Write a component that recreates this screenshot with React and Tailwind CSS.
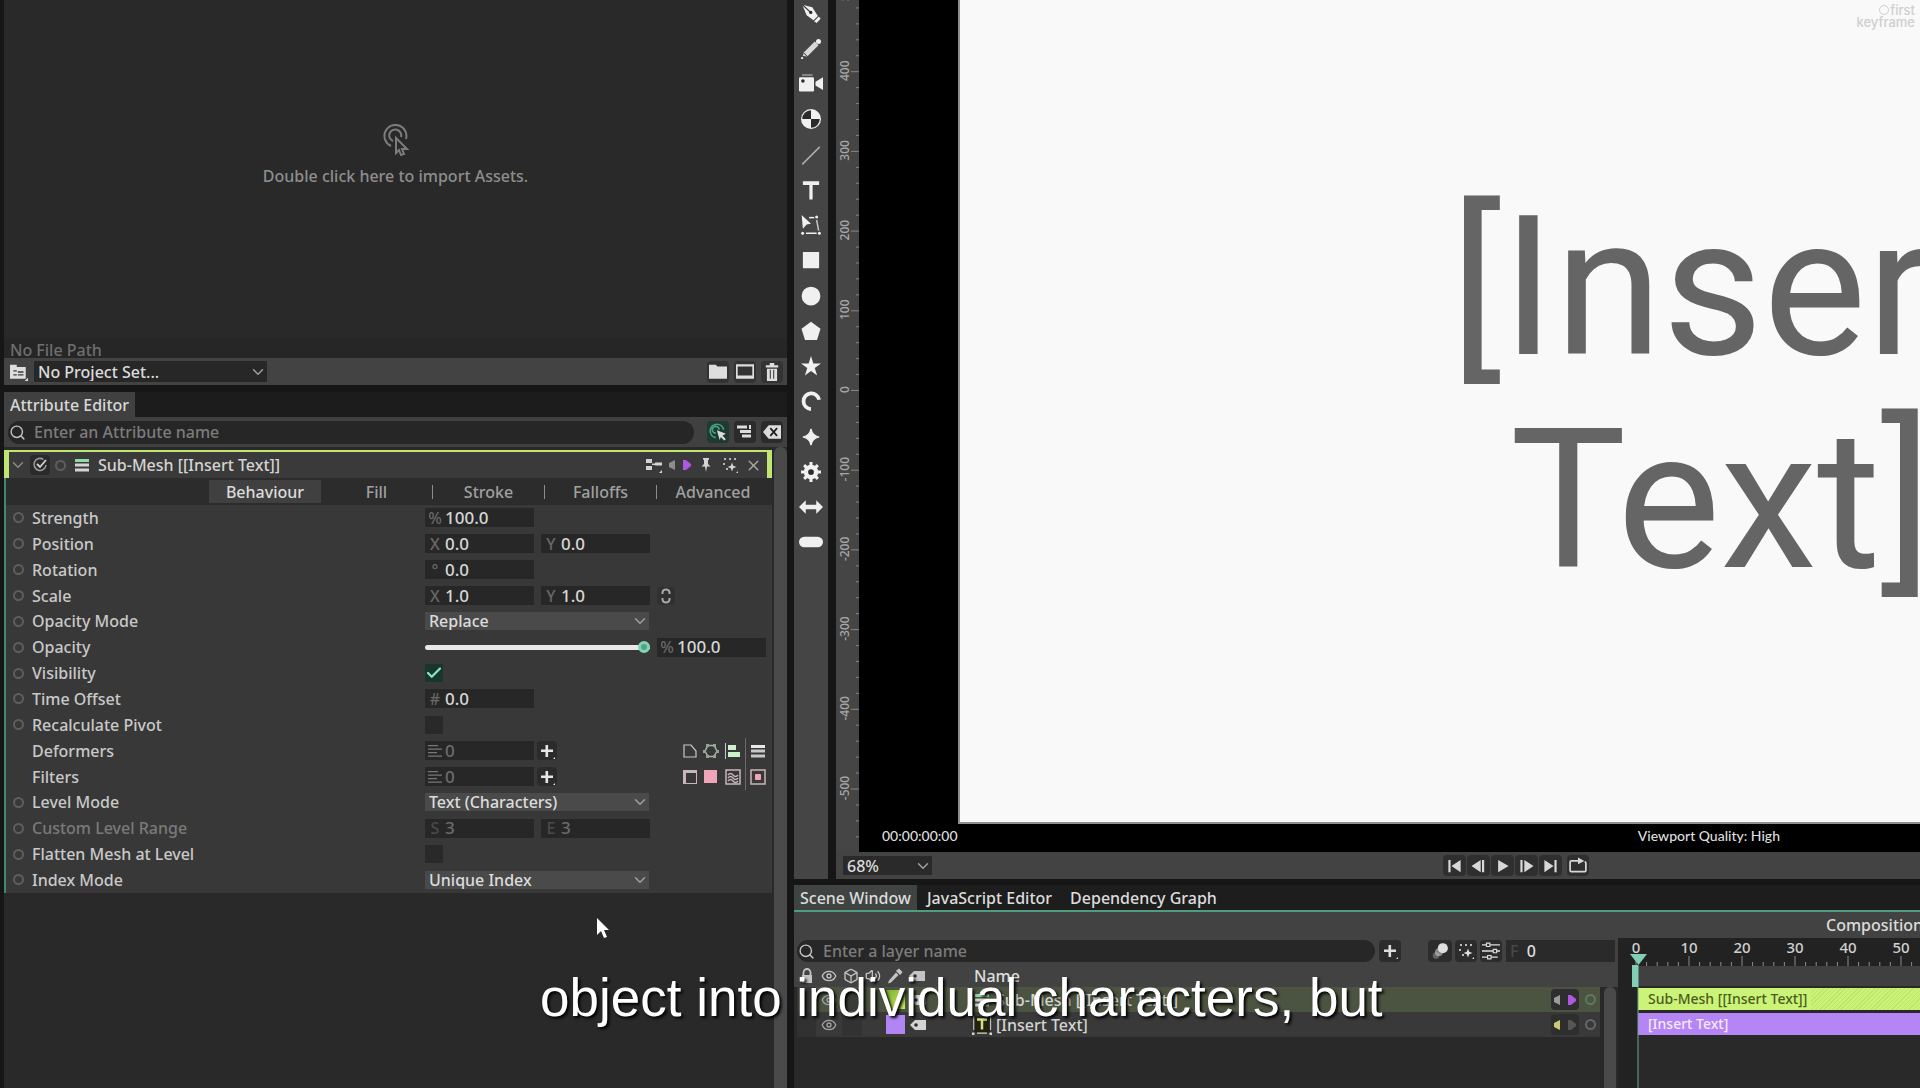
import { useState } from "react";
import { Box, Check, ChevronDown, Eye, Search, Volume2, X } from "lucide-react";

const ATTR_TABS = ["Behaviour", "Fill", "Stroke", "Falloffs", "Advanced"];

const LAYERS = [
  { name: "Sub-Mesh [[Insert Text]]", type: "mesh", selected: true },
  { name: "[Insert Text]", type: "text", selected: false },
];

/* ---------- icons ---------- */

function Glyph({ className = "h-4 w-4", children }) {
  return (
    <svg viewBox="0 0 16 16" fill="currentColor" className={`${className} shrink-0`} aria-hidden="true">
      {children}
    </svg>
  );
}

function Corner() {
  return <path d="M16 13v3h-3z" />;
}

const TOOLS = [
  {
    name: "Pen",
    icon: (
      <>
        <path d="M1 0.500 L9 2.500 L13.500 9.500 L10 13 L4.500 9 Z" />
        <path d="M10.500 13.700 L14.300 10 L15.700 11.800 L12.500 15.200 Z" />
        <path d="M1 0.500 L7.500 6.500" stroke="#2b2b2b" strokeWidth="1" />
        <circle cx="7.800" cy="6.700" r="1.300" fill="#2b2b2b" />
      </>
    ),
  },
  {
    name: "Pencil",
    icon: (
      <>
        <path d="M2 11 L11 2 L14 5 L5 14 L1.500 13.500 Z" fill="#d8d8d8" />
        <circle cx="14" cy="2" r="2" />
        <circle cx="0.900" cy="15.200" r="0.900" />
        <path d="M2 11l3 3" stroke="#2b2b2b" strokeWidth="0.800" />
      </>
    ),
  },
  {
    name: "Camera",
    icon: (
      <>
        <rect x="2" y="1.500" width="7" height="1" fill="#9a9a9a" />
        <rect x="0" y="3.500" width="10" height="9.500" rx="0.800" />
        <circle cx="2.600" cy="6" r="1.200" fill="#2b2b2b" />
        <path d="M16 3.500v8.500l-5-3v-2.500z" />
      </>
    ),
  },
  {
    name: "Checker",
    icon: (
      <>
        <circle cx="8" cy="8" r="8" />
        <path d="M8 1V8H1A7 7 0 0 1 8 1zM8 15V8h7A7 7 0 0 1 8 15z" fill="#2b2b2b" />
      </>
    ),
  },
  { name: "Line", icon: <path d="M1 15.500 L15 1.500" stroke="#b0b0b0" strokeWidth="1.200" /> },
  { name: "Text", icon: <path d="M1.500 1h13v3H9.300V15.500H6.700V4H1.500z" /> },
  {
    name: "Transform",
    icon: (
      <>
        <path d="M0.500 0 L8 7 L4.500 7.500 L1.500 11 Z" />
        <rect x="6.500" y="1.500" width="4" height="1.200" />
        <circle cx="12.500" cy="1.500" r="1.200" />
        <path d="M12.500 4l1.600 8.500" stroke="#c8c8c8" strokeWidth="1.200" />
        <rect x="4" y="14" width="8.500" height="1.200" />
        <circle cx="1.300" cy="14.600" r="1.200" />
        <circle cx="14.700" cy="14.600" r="1.200" />
      </>
    ),
  },
  { name: "Rectangle", icon: <rect x="1.500" y="1.500" width="13" height="13" rx="0.500" /> },
  { name: "Ellipse", icon: <circle cx="8" cy="8" r="7.500" /> },
  { name: "Polygon", icon: <path d="M8 0.500l7.600 5.700-2.800 9H3.200L0.400 6.200z" /> },
  { name: "Star", icon: <path d="M8 0l1.900 6h6.100l-5 3.500 1.900 6L8 12 3.100 15.500l1.900-6L0 6h6.100z" /> },
  { name: "Arc", icon: <path d="M14.500 7A6.300 6.300 0 1 0 8 14.500" fill="none" stroke="currentColor" strokeWidth="3" /> },
  { name: "Super ellipse", icon: <path d="M8 1.500Q9 7 14.500 8 9 9 8 14.500 7 9 1.500 8 7 7 8 1.500z" stroke="currentColor" /> },
  {
    name: "Gear",
    icon: (
      <>
        <circle cx="8" cy="8" r="5.800" />
        <path
          d="M8 0v16M0 8h16M2.500 2.500l11 11M13.500 2.500l-11 11"
          stroke="currentColor"
          strokeWidth="2.400"
        />
        <circle cx="8" cy="8" r="2.300" fill="#2b2b2b" />
      </>
    ),
  },
  { name: "Arrow", icon: <path d="M0 8l4.500-4.500v3h7v-3L16 8l-4.500 4.500v-3h-7v3z" /> },
  { name: "Capsule", icon: <rect x="0" y="4.500" width="16" height="7" rx="3.500" /> },
];

function FolderIcon() {
  return (
    <Glyph className="h-[18px] w-[18px]">
      <path d="M0 1.500h6l1.500 1.500H16V14H0z" />
    </Glyph>
  );
}

function ProjectIcon() {
  return (
    <Glyph className="h-[18px] w-[18px]">
      <path d="M0 1.500h6v2h8V14H0z" />
      <path d="M3 7h3m1 1h5M3 10.500h3m1 0h5" stroke="#3a3a3a" strokeWidth="1.200" />
      <Corner />
    </Glyph>
  );
}

function PlusIcon() {
  return (
    <Glyph>
      <path d="M6.500 2h2.600v4.500H14v2.600H9.100V14H6.500V9.100H2V6.500h4.500z" />
      <path d="M16 14v2h-2z" />
    </Glyph>
  );
}

function MenuBars({ tint }) {
  return (
    <Glyph>
      <path d="M1 2h14v3H1z" fill={tint} />
      <path d="M1 6.500h14v3H1zM1 11.500h14v3H1z" />
    </Glyph>
  );
}

function SparkIcon() {
  return (
    <Glyph>
      <path d="M2 1h2v2H2zM7 1h2v2H7zM12 1h2v2h-2zM1 6h2v2H1zM4 11h2v2H4z" opacity="0.8" />
      <path d="M10 5.500l1.200 3.300 3.300 1.200-3.300 1.200L10 14.500l-1.200-3.300L5.500 10l3.300-1.200z" />
      <path d="M16 14v2h-2z" />
    </Glyph>
  );
}

function TagIcon() {
  return (
    <Glyph className="h-4 w-[18px]">
      <path d="M5 3h11v10H5L0 8z" />
      <circle cx="6" cy="8" r="1.800" fill="#2b2b2b" />
    </Glyph>
  );
}

function KeyArrows({ left, right }) {
  return (
    <svg viewBox="0 0 28 16" className="h-4 w-7 shrink-0" aria-hidden="true">
      <path d="M9 3v10L3 10V6z" fill={left} />
      <path d="M17 3v10h3l5-4V7l-5-4z" fill={right} />
    </svg>
  );
}

function SearchIcon() {
  return (
    <span className="flex w-[26px] shrink-0 pl-px text-[#c4c4c4]">
      <Search className="h-[17px] w-[17px]" strokeWidth={2} />
    </span>
  );
}

function Ring({ className = "border-[#5e5e5e]" }) {
  return <span className={`block h-[11px] w-[11px] shrink-0 rounded-full border-2 ${className}`} />;
}

function IconButton({ label, className = "h-[22px] w-[22px]", children }) {
  return (
    <button type="button" aria-label={label} className={`flex shrink-0 items-center justify-center rounded-sm ${className}`}>
      {children}
    </button>
  );
}

/* ---------- form controls ---------- */

function Field({ id, label, prefix, value, disabled }) {
  return (
    <span className="flex h-[19px] w-[109px] shrink-0 items-center bg-[#272727]">
      <span className={`w-5 shrink-0 text-center ${disabled ? "text-[#4a4a4a]" : "text-[#686868]"}`}>
        {prefix}
      </span>
      <input
        id={id}
        aria-label={label}
        defaultValue={value}
        disabled={disabled}
        className={`w-full min-w-0 bg-transparent text-[17px] leading-5 outline-none ${disabled ? "text-[#6c6c6c]" : "text-[#d6d6d6]"}`}
      />
    </span>
  );
}

function Select({ id, label, options, className = "h-[18px] w-[224px] bg-[#4a4a4a]" }) {
  return (
    <span className={`flex shrink-0 items-center ${className}`}>
      <select
        id={id}
        aria-label={label}
        className="h-full w-full appearance-none bg-transparent pl-1 leading-[18px] text-[#dcdcdc] outline-none"
      >
        {options.map((o) => (
          <option key={o}>{o}</option>
        ))}
      </select>
      <ChevronDown className="pointer-events-none -ml-[18px] h-[18px] w-[18px] shrink-0 text-[#a0a0a0]" strokeWidth={2} />
    </span>
  );
}

function Toggle({ id, defaultChecked }) {
  const [on, setOn] = useState(!!defaultChecked);
  return (
    <span className="grid h-[18px] w-[18px] place-items-center">
      <input
        id={id}
        type="checkbox"
        checked={on}
        onChange={() => setOn(!on)}
        className="col-start-1 row-start-1 h-[18px] w-[18px] appearance-none bg-[#292929] checked:bg-[#17372c]"
      />
      {on && (
        <Check className="pointer-events-none col-start-1 row-start-1 h-[18px] w-[18px] text-[#8fe0c0]" strokeWidth={3} />
      )}
    </span>
  );
}

function Row({ id, label, ring = true, dim, children }) {
  return (
    <div className="flex min-h-0 flex-1 items-center">
      <span className="flex w-[26px] shrink-0 items-center pl-[7px]">{ring && <Ring />}</span>
      <label htmlFor={id} className={`w-[393px] shrink-0 ${dim ? "text-[#7a7a7a]" : "text-[#c9c9c9]"}`}>
        {label}
      </label>
      <div className="flex flex-1 items-center gap-[7px]">{children}</div>
    </div>
  );
}

function ListField({ id, label }) {
  return (
    <div className="flex gap-[3px]">
      <Field
        id={id}
        label={label}
        value="0"
        disabled
        prefix={
          <Glyph className="mx-auto h-4 w-4 text-[#777]">
            <path d="M1 2h10v1.200H1zM1 5.500h14v1.200H1zM1 9h9v1.200H1zM1 12.500h14v1.200H1z" />
          </Glyph>
        }
      />
      <IconButton label={`Add to ${label}`} className="h-[19px] w-5 bg-[#2b2b2b] text-[#e6e6e6]">
        <PlusIcon />
      </IconButton>
    </div>
  );
}

/* ---------- left column ---------- */

function AssetsPanel() {
  return (
    <section className="flex h-[385px] flex-col">
      <button
        type="button"
        className="flex flex-1 flex-col items-center bg-[#292929] pt-[124px] text-[#8e8e8e]"
      >
        <svg viewBox="0 0 28 32" className="h-8 w-7" fill="none" stroke="#7c7c7c" strokeWidth="2" aria-hidden="true">
          <path d="M9 22A11 11 0 1 1 24 15" />
          <path d="M11 17a6 6 0 1 1 8-4" />
          <path d="M14 14v15l3-3 2 5 3-1-2-5h5z" />
        </svg>
        <span className="mt-2 leading-6">Double click here to import Assets.</span>
      </button>
      <p className="h-[19px] bg-[#262626] pl-[6px] leading-[22px] text-[#6f6f6f]">No File Path</p>
      <div className="flex h-[27px] items-center bg-[#434343] px-1 text-[#dedede]">
        <IconButton label="Project folder">
          <ProjectIcon />
        </IconButton>
        <Select
          label="Project"
          options={["No Project Set..."]}
          className="ml-1 h-[21px] w-[233px] bg-[#272727]"
        />
        <div className="ml-auto flex gap-[5px]">
          <IconButton label="New folder" className="h-[22px] w-[22px] bg-[#333]">
            <FolderIcon />
          </IconButton>
          <IconButton label="New composition" className="h-[22px] w-[22px] bg-[#333]">
            <Glyph className="h-[18px] w-[18px]">
              <path d="M0 1h16v13H0zM1.500 3v8h13V3z" fillRule="evenodd" />
            </Glyph>
          </IconButton>
          <IconButton label="Delete" className="h-[22px] w-[22px] bg-[#333]">
            <Glyph className="h-[18px] w-[18px]">
              <path d="M2.500 2H6V0h4v2h3.500v2h-11zM3.500 5h9v11h-9z" />
              <path d="M6.500 6v8M9.500 6v8" stroke="#444" />
            </Glyph>
          </IconButton>
        </div>
      </div>
    </section>
  );
}

function EffectIcons() {
  return (
    <div className="ml-auto flex items-center pr-[3px] text-[#c8c8c8]">
      <Glyph className="mr-[5px] h-4 w-4">
        <path d="M2 2h7l5 6v6H2z" fill="none" stroke="currentColor" strokeWidth="1.200" />
      </Glyph>
      <Glyph className="mr-[6px] h-4 w-4">
        <path d="M5 2.500h6L14 8l-3 5.500H5L2 8z" fill="none" stroke="#a8b5a8" strokeWidth="1.500" />
        <path d="M3 1h3v3H3zM10 1h3v3h-3zM0 7h3v3H0zM13 7h3v3h-3zM3 12h3v3H3zM10 12h3v3h-3z" fill="#8fa790" />
      </Glyph>
      <Glyph>
        <path d="M0 0h1v16H0z" />
        <path d="M3 2h8v5H3zM3 9h12v5H3z" fill="#cdf0cf" />
      </Glyph>
      <span className="mx-1 h-[26px] w-px bg-[#6c6c6c]" />
      <MenuBars tint="#e8e8e8" />
    </div>
  );
}

function FilterIcons() {
  return (
    <div className="ml-auto flex items-center pr-[3px] text-[#c9b5bb]">
      <Glyph className="mr-[5px] h-4 w-4">
        <path d="M1 1h14v14H1zM4 4v10h10V4z" fillRule="evenodd" />
      </Glyph>
      <Glyph className="mr-[6px] h-4 w-4">
        <path d="M1 1h13v13H1z" fill="#efa4b8" />
      </Glyph>
      <Glyph>
        <path d="M1 1h14v14H1z" fill="none" stroke="currentColor" strokeWidth="1.500" />
        <path d="M3 6q2.500-3 5 0t5 0M3 9q2.500-3 5 0t5 0M3 12q2.500-3 5 0t5 0" fill="none" stroke="currentColor" strokeWidth="1.500" />
      </Glyph>
      <span className="mx-1 h-[26px] w-px bg-[#6c6c6c]" />
      <Glyph>
        <path d="M1 1h14v14H1z" fill="none" stroke="currentColor" strokeWidth="1.500" />
        <rect x="5" y="5" width="6" height="6" rx="1" fill="#efa4b8" />
      </Glyph>
    </div>
  );
}

function AttributeEditor() {
  const [tab, setTab] = useState("Behaviour");
  const [opacity, setOpacity] = useState(100);

  return (
    <section className="flex min-h-0 flex-1 flex-col pt-[7px]">
      <div className="flex h-[25px] bg-[#1c1c1c]">
        <h2 className="bg-[#404040] px-[6px] leading-[26px] text-[#d8d8d8]">Attribute Editor</h2>
      </div>
      <div className="flex h-[30px] items-center bg-[#404040] px-1">
        <div className="flex h-[23px] flex-1 items-center rounded-full bg-[#262626]">
          <SearchIcon />
          <input
            aria-label="Attribute search"
            placeholder="Enter an Attribute name"
            className="w-full bg-transparent text-[#ccc] outline-none placeholder:text-[#7c7c7c]"
          />
        </div>
        <div className="ml-[13px] flex gap-[5px] text-[#dcdcdc]">
          <IconButton label="Track selection" className="h-[22px] w-[22px] bg-[#1f3a30]">
            <Glyph className="h-[18px] w-[18px]">
              <path d="M6 13A6 6 0 1 1 13 6M6 9a3 3 0 1 1 3-3" fill="none" stroke="#46a27f" strokeWidth="1.500" />
              <path d="M7 6.500l8 3-3 1.500 3 3.500-1.500 1-3-3-1 2.500z" />
            </Glyph>
          </IconButton>
          <IconButton label="Show connections" className="h-[22px] w-[22px] bg-[#2b2b2b]">
            <Glyph>
              <path d="M0 1.500h10v3H0zM3 6h11v3H3zM5 10.500h9v3H5zM12 1h2v4h-2z" />
            </Glyph>
          </IconButton>
          <IconButton label="Clear" className="h-[22px] w-[22px] bg-[#2b2b2b]">
            <Glyph className="h-[18px] w-[18px]">
              <path d="M5 2h11v12H5L0 8z" />
              <path d="M6.500 4.500l6 7M12.500 4.500l-6 7" stroke="#222" strokeWidth="1.600" />
            </Glyph>
          </IconButton>
        </div>
      </div>

      <div className="flex min-h-0 flex-1 bg-[#292929]">
        <div className="flex-1 pt-[3px]">
          <header className="flex h-7 items-center border-x-[5px] border-t-2 border-[#bfe673] bg-[#3a3a3a] text-[#d4d4d4]">
            <ChevronDown className="h-[18px] w-[18px] text-[#8a8a8a]" />
            <IconButton label="Enabled" className="ml-[3px] h-[20px] w-[20px] bg-[#2a2a2a]">
              <Glyph>
                <path d="M11.500 2.500A6 6 0 1 0 14 8" fill="none" stroke="#9a9a9a" strokeWidth="1.500" />
                <path d="M5 7l3 3 6-7" fill="none" stroke="currentColor" strokeWidth="1.800" />
              </Glyph>
            </IconButton>
            <span className="ml-[5px] mr-2">
              <Ring />
            </span>
            <MenuBars tint="#8fdca6" />
            <h3 className="ml-2">Sub-Mesh [[Insert Text]]</h3>
            <div className="ml-auto flex items-center pr-1">
              <IconButton label="Connections" className="h-5 w-5">
                <Glyph>
                  <path d="M0 2h6v4H0zM0 9h6v4H0zM6 6.500h4v1.500H6zM9 5.500h7v3H9z" />
                  <Corner />
                </Glyph>
              </IconButton>
              <IconButton label="Keyframes" className="mx-[2px] h-5 w-7">
                <KeyArrows left="#8d8d8d" right="#b056e0" />
              </IconButton>
              <IconButton label="Pin" className="h-5 w-5">
                <Glyph>
                  <path d="M5 1h6v1.500l-1 .5v4l2.500 2.500H9L8 15l-1-5.500H3.500L6 7V3l-1-.5z" />
                </Glyph>
              </IconButton>
              <IconButton label="Presets" className="ml-1 h-5 w-5">
                <SparkIcon />
              </IconButton>
              <IconButton label="Close" className="ml-[3px] h-5 w-5 text-[#a8a8a8]">
                <X className="h-[17px] w-[17px]" />
              </IconButton>
            </div>
          </header>

          <div className="border-l-2 border-[#3f8a6c]">
            <nav className="flex h-[27px] items-center bg-[#2c2c2c] pl-[203px]" role="tablist">
              {ATTR_TABS.map((name, i) => (
                <button
                  key={name}
                  type="button"
                  role="tab"
                  aria-selected={tab === name}
                  onClick={() => setTab(name)}
                  className={`flex h-[23px] w-28 shrink-0 items-center justify-center ${
                    tab === name ? "bg-[#404040] text-[#dcdcdc]" : "text-[#a0a0a0]"
                  }`}
                >
                  <span className="flex-1">{name}</span>
                  {i > 0 && i < 4 && <span className="h-[14px] w-px bg-[#8a8a8a]" />}
                </button>
              ))}
            </nav>
            <div className="flex h-[388px] flex-col bg-[#383838] pr-[3px]">
              <Row id="strength" label="Strength">
                <Field id="strength" prefix="%" value="100.0" />
              </Row>
              <Row id="pos-x" label="Position">
                <Field id="pos-x" prefix="X" value="0.0" />
                <Field label="Position Y" prefix="Y" value="0.0" />
              </Row>
              <Row id="rotation" label="Rotation">
                <Field id="rotation" prefix="°" value="0.0" />
              </Row>
              <Row id="scale-x" label="Scale">
                <Field id="scale-x" prefix="X" value="1.0" />
                <Field label="Scale Y" prefix="Y" value="1.0" />
                <IconButton label="Link scale" className="h-[18px] w-[18px] bg-[#303030] text-[#a8a8a8]">
                  <Glyph>
                    <path
                      d="M4.500 6V4.500a3.500 3 0 0 1 7 0V6M4.500 10v1.500a3.500 3 0 0 0 7 0V10"
                      fill="none"
                      stroke="currentColor"
                      strokeWidth="2"
                    />
                  </Glyph>
                </IconButton>
              </Row>
              <Row id="opacity-mode" label="Opacity Mode">
                <Select id="opacity-mode" options={["Replace", "Multiply", "Add"]} />
              </Row>
              <Row id="opacity" label="Opacity">
                <input
                  id="opacity"
                  type="range"
                  min="0"
                  max="100"
                  value={opacity}
                  onChange={(e) => setOpacity(Number(e.target.value))}
                  className="h-[5px] w-[225px] shrink-0 appearance-none rounded-full bg-[#e8e8e8] [&::-webkit-slider-thumb]:h-3 [&::-webkit-slider-thumb]:w-3 [&::-webkit-slider-thumb]:appearance-none [&::-webkit-slider-thumb]:rounded-full [&::-webkit-slider-thumb]:border-[3px] [&::-webkit-slider-thumb]:border-[#83d3b5] [&::-webkit-slider-thumb]:bg-[#4fa585]"
                />
                <Field label="Opacity percent" prefix="%" value="100.0" />
              </Row>
              <Row id="visibility" label="Visibility">
                <Toggle id="visibility" defaultChecked />
              </Row>
              <Row id="time-offset" label="Time Offset">
                <Field id="time-offset" prefix="#" value="0.0" />
              </Row>
              <Row id="pivot" label="Recalculate Pivot">
                <Toggle id="pivot" />
              </Row>
              <Row id="deformers" label="Deformers" ring={false}>
                <ListField id="deformers" label="Deformers" />
                <EffectIcons />
              </Row>
              <Row id="filters" label="Filters" ring={false}>
                <ListField id="filters" label="Filters" />
                <FilterIcons />
              </Row>
              <Row id="level-mode" label="Level Mode">
                <Select id="level-mode" options={["Text (Characters)", "Text (Words)", "Text (Lines)"]} />
              </Row>
              <Row id="range-start" label="Custom Level Range" dim>
                <Field id="range-start" prefix="S" value="3" disabled />
                <Field label="Custom Level Range End" prefix="E" value="3" disabled />
              </Row>
              <Row id="flatten" label="Flatten Mesh at Level">
                <Toggle id="flatten" />
              </Row>
              <Row id="index-mode" label="Index Mode">
                <Select id="index-mode" options={["Unique Index", "Shared Index"]} />
              </Row>
            </div>
          </div>
        </div>
        <div className="ml-[2px] w-[13px] rounded-t-md bg-[#4a4a4a]" />
      </div>
    </section>
  );
}

/* ---------- viewport ---------- */

function Toolbox() {
  return (
    <nav className="w-[34px] shrink-0 bg-[#454545] text-[#f0f0f0]" aria-label="Tools">
      <div className="-mt-1 flex flex-col">
        {TOOLS.map((tool, i) => (
          <button
            key={tool.name}
            type="button"
            aria-label={tool.name}
            className={`flex w-full items-center justify-center ${i % 4 === 3 ? "h-[36px]" : "h-[35px]"}`}
          >
            <Glyph className={["Camera", "Arrow", "Capsule"].includes(tool.name) ? "h-6 w-6" : "h-5 w-5"}>
              {tool.icon}
            </Glyph>
          </button>
        ))}
      </div>
    </nav>
  );
}

function VerticalRuler() {
  const marks = [];
  for (let i = 0; i <= 54; i++) {
    const y = -8 + i * 15.94;
    const major = i % 5 === 0;
    marks.push(
      <g key={i}>
        <path d={`M${major ? 15 : 20} ${y}h${major ? 8 : 3}`} stroke="#858585" />
        {major && (
          <text
            textAnchor="middle"
            transform={`translate(13 ${y - 1}) rotate(-90)`}
            fontSize="12"
            fill="#a8a8a8"
          >
            {500 - i * 20}
          </text>
        )}
      </g>
    );
  }
  return (
    <svg className="h-full w-[23px] shrink-0 bg-[#454545]" aria-hidden="true">
      {marks}
    </svg>
  );
}

const PLAYBACK = [
  { label: "First frame", d: "M1 1h2.500v14H1zM15 1v14L4.500 8z" },
  { label: "Previous frame", d: "M12 1h2.500v14H12zM10.500 1v14L0 8z" },
  { label: "Play", d: "M3 1l12 7-12 7z" },
  { label: "Next frame", d: "M1 1h2.500v14H1zM5.500 1v14L16 8z" },
  { label: "Last frame", d: "M12.500 1H15v14h-2.500zM1 1v14l10.500-7z" },
];

function Viewport() {
  return (
    <section className="flex min-w-0 flex-1 flex-col bg-[#434343]">
      <div className="flex min-h-0 flex-1">
        <VerticalRuler />
        <div className="flex min-w-0 flex-1 flex-col bg-black">
          <div className="ml-[99px] min-h-0 flex-1 overflow-hidden border-b-2 border-l-2 border-[#8e8e8e] bg-[#f9f9f9]">
            <div className="relative">
              <p className="absolute right-[5px] top-1 text-right font-[Inter,sans-serif] text-[13px] leading-3 text-[#cfcfcf]">
                <span className="mr-px inline-block h-[10px] w-[10px] rounded-full border border-[#cfcfcf]" />
                first
                <br />
                keyframe
              </p>
              <p className="whitespace-nowrap pl-[490px] pt-[181px] font-[Roboto,sans-serif] text-[195px] font-normal leading-[213px] text-[#656565]">
                <span className="block">[Insert</span>
                <span className="block pl-[60px]">Text]</span>
              </p>
            </div>
          </div>
          <div className="flex h-7 items-center pb-1 font-[Lato,sans-serif] text-sm text-[#dedede]">
            <span className="pl-[23px]">00:00:00:00</span>
            <span className="ml-auto pr-[140px]">Viewport Quality: High</span>
          </div>
        </div>
      </div>
      <div className="flex h-[27px] items-center pl-[7px]">
        <Select label="Zoom" options={["68%", "100%"]} className="h-[19px] w-[89px] bg-[#2a2a2a]" />
        <div className="flex flex-1 items-center justify-center pl-[180px] text-[#d8d8d8]">
          {PLAYBACK.map((b) => (
            <IconButton key={b.label} label={b.label} className="mr-px h-[21px] w-[23px] bg-[#2f2f2f]">
              <Glyph className="h-[14px] w-[15px]">
                <path d={b.d} />
              </Glyph>
            </IconButton>
          ))}
          <IconButton label="Loop" className="ml-1 h-[21px] w-[22px] bg-[#2f2f2f]">
            <Glyph className="h-[18px] w-[18px]">
              <path d="M8 3.500H2a1 1 0 0 0-1 1V12a1 1 0 0 0 1 1h12a1 1 0 0 0 1-1V6a2 2 0 0 0-1-2" fill="none" stroke="currentColor" strokeWidth="1.500" />
              <path d="M8 0.500l5.500 3-5.500 3z" />
            </Glyph>
          </IconButton>
        </div>
      </div>
    </section>
  );
}

/* ---------- scene window ---------- */

function LayerRow({ layer }) {
  const mesh = layer.type === "mesh";
  return (
    <li
      className={`flex h-[25px] items-center text-[#d4d4d4] ${layer.selected ? "bg-[#4b5440]" : "bg-[#393939]"}`}
    >
      <span className="h-full w-[19px] bg-[#2e2e2e]/70" />
      <IconButton label="Toggle visibility" className="h-[22px] w-[26px]">
        <Eye className="h-4 w-4 text-[#a2a2a2]" />
      </IconButton>
      <span className="h-[22px] w-5 bg-[#2e2e2e]/60" />
      <span
        className={`ml-6 h-[19px] w-[19px] ${mesh ? "bg-gradient-to-br from-[#7fae30] to-[#c8f060]" : "bg-[#b285f4]"}`}
      />
      <span className="ml-1">
        <TagIcon />
      </span>
      <span className="ml-[45px] flex w-5 justify-center">
        {mesh ? (
          <MenuBars tint="#8fdca6" />
        ) : (
          <Glyph className="h-5 w-5">
            <path d="M2 1h12v13H2z" fill="#20220f" />
            <path d="M4 2.500h8v2H9v7H7v-7H4z" fill="#d6dc8a" />
            <path d="M0 14h2v2H0zM14 14h2v2h-2zM4 14h8v1H4zM1 1h.800v11H1zM14.500 1h.800v11h-.800z" />
          </Glyph>
        )}
      </span>
      <span className="ml-1">{layer.name}</span>
      <span className="ml-auto flex h-[21px] items-center rounded-sm bg-[#2e2e2e]">
        {mesh ? (
          <KeyArrows left="#9a9a9a" right="#b056e0" />
        ) : (
          <KeyArrows left="#cfc873" right="#555555" />
        )}
      </span>
      <span className="ml-[6px] mr-1">
        <Ring className={mesh ? "border-[#5f7a60]" : "border-[#666]"} />
      </span>
    </li>
  );
}

function LayerList() {
  return (
    <div className="flex w-[824px] shrink-0 flex-col">
      <div className="flex h-[26px] items-center bg-[#424242] pl-[3px] text-[#dedede]">
        <div className="flex h-[22px] w-[578px] items-center rounded-full bg-[#272727]">
          <SearchIcon />
          <input
            aria-label="Layer search"
            placeholder="Enter a layer name"
            className="w-full bg-transparent outline-none placeholder:text-[#7c7c7c]"
          />
        </div>
        <IconButton label="Add layer" className="ml-1 h-[22px] w-[22px] bg-[#2c2c2c]">
          <PlusIcon />
        </IconButton>
        <IconButton label="Motion blur" className="ml-[27px] h-[22px] w-[24px] bg-[#2c2c2c]">
          <Glyph className="h-[18px] w-[18px]">
            <circle cx="4.500" cy="12" r="3" opacity="0.300" />
            <circle cx="7" cy="9" r="3.500" opacity="0.500" />
            <circle cx="10.500" cy="5.500" r="4.500" />
          </Glyph>
        </IconButton>
        <IconButton label="Effects" className="ml-[3px] h-[22px] w-[22px] bg-[#2c2c2c]">
          <SparkIcon />
        </IconButton>
        <IconButton label="Filters" className="ml-[3px] h-[22px] w-[22px] bg-[#2c2c2c]">
          <Glyph className="h-[18px] w-[18px]">
            <path d="M0 2.500h16M0 8h16M0 13.500h14" stroke="currentColor" strokeWidth="1.200" />
            <path d="M4 1h3v3H4zM10 6.500h3v3h-3zM5 12h3v3H5z" fill="#2c2c2c" stroke="currentColor" />
          </Glyph>
        </IconButton>
        <div className="ml-1 flex h-[22px] flex-1 items-center bg-[#2a2a2a] pl-1">
          <label htmlFor="frame" className="w-5 text-[#484848]">
            F
          </label>
          <input id="frame" defaultValue="0" className="w-full bg-transparent outline-none" />
        </div>
        <span className="w-[3px]" />
      </div>
      <div className="flex h-[23px] items-center bg-[#424242] text-[#c4c4c4]">
        <div className="flex items-center gap-1 pl-1">
          <Glyph className="h-4 w-[18px]">
            <path d="M4.500 7V4.500a3.500 3.500 0 0 1 7 0V7" fill="none" stroke="currentColor" strokeWidth="1.800" />
            <path d="M3 7h10v8H3z" />
          </Glyph>
          <Eye className="h-4 w-[18px]" />
          <Box className="h-4 w-[18px]" />
          <Volume2 className="h-4 w-[18px]" />
          <Glyph className="h-4 w-[18px]">
            <path d="M10 2l2-1.500 3.500 3.500L14 6l-1 1-4-4zM9 4.500L11.500 7 4 14.500l-3 1 1-3z" />
          </Glyph>
          <TagIcon />
        </div>
        <span className="ml-12 text-[#dedede]">Name</span>
      </div>
      <div className="flex min-h-0 flex-1 bg-[#292929]">
        <ul className="flex-1 pl-[3px]">
          {LAYERS.map((l) => (
            <LayerRow key={l.name} layer={l} />
          ))}
        </ul>
        <div className="ml-1 mr-[2px] w-3 rounded-t-md bg-[#4a4a4a]" />
      </div>
    </div>
  );
}

function Timeline() {
  const ticks = [];
  for (let i = 0; i <= 27; i++) {
    const x = 18 + i * 10.6;
    const major = i % 5 === 0;
    ticks.push(
      <g key={i}>
        <path d={`M${x} ${major ? 18 : 24}V28`} stroke="#8a8a8a" />
        {major && (
          <text x={x} y="15" textAnchor="middle" fontSize="15" fill="#d0d0d0">
            {i * 2}
          </text>
        )}
      </g>
    );
  }
  return (
    <div className="relative flex min-w-0 flex-1 flex-col overflow-hidden bg-[#292929]">
      <svg className="h-7 w-full shrink-0 bg-[#222]" aria-hidden="true">
        {ticks}
      </svg>
      <div className="h-5 shrink-0 border-l-[20px] border-[#222] bg-[#404040]" />
      <div className="min-h-0 flex-1 border-l-[20px] border-[#222] text-sm">
        <div className="mt-[2px] flex h-[22px] bg-[#cbf377] pl-[10px] leading-[22px] text-[#4a5c20]">
          Sub-Mesh [[Insert Text]]
          <span className="ml-1 flex-1 bg-[repeating-linear-gradient(135deg,#a9cf5866_0px,#a9cf5866_1px,transparent_1px,transparent_3px)]" />
        </div>
        <div className="mt-[3px] h-[22px] bg-[#b585f5] pl-[10px] leading-[22px] text-[#f3eaff]">
          [Insert Text]
        </div>
      </div>
      {/* playhead */}
      <svg viewBox="0 0 18 151" className="absolute left-[12px] top-4 h-[151px] w-[18px]" aria-hidden="true">
        <path d="M0 0h17L8.500 11z" fill="#7fd0b4" />
        <path d="M2 11h6.500v22H2z" fill="#7fd0b4" />
        <path d="M8 33v118" stroke="#6aa890" />
      </svg>
    </div>
  );
}

function SceneWindow() {
  return (
    <section className="mt-[6px] flex h-[203px] shrink-0 flex-col">
      <nav className="flex h-[27px] gap-[2px] border-b-2 border-[#4f9c7e] bg-[#1d1d1d] text-[#dcdcdc]" role="tablist">
        <button type="button" role="tab" aria-selected="true" className="bg-[#3f4341] px-[6px]">
          Scene Window
        </button>
        <button type="button" role="tab" aria-selected="false" className="px-2">
          JavaScript Editor
        </button>
        <button type="button" role="tab" aria-selected="false" className="px-2">
          Dependency Graph
        </button>
      </nav>
      <div className="flex h-[26px] shrink-0 justify-end bg-[#424242]">
        <h2 className="w-[94px] leading-[26px] text-[#dcdcdc]">Composition</h2>
      </div>
      <div className="flex min-h-0 flex-1">
        <LayerList />
        <Timeline />
      </div>
    </section>
  );
}

export default function App() {
  return (
    <div className="relative flex h-screen overflow-hidden bg-[#161616] font-['Noto_Sans',sans-serif] text-base font-medium">
      <aside className="flex w-[787px] shrink-0 flex-col pl-1">
        <AssetsPanel />
        <AttributeEditor />
      </aside>
      <main className="ml-[7px] flex min-w-0 flex-1 flex-col">
        <div className="flex min-h-0 flex-1 gap-2">
          <Toolbox />
          <Viewport />
        </div>
        <SceneWindow />
      </main>

      <svg viewBox="0 0 12 20" className="absolute left-[597px] top-[916px] h-6 w-3" aria-hidden="true">
        <path d="M0 0v17l4-4 3 7 3-1-3-7h5z" fill="#fff" />
      </svg>
      <p className="absolute left-[540px] top-[968px] whitespace-nowrap font-['Liberation_Sans',Arial,sans-serif] text-[53px] font-normal leading-[60px] text-white [text-shadow:2px_2px_3px_#000]">
        object into individual characters, but
      </p>
    </div>
  );
}
